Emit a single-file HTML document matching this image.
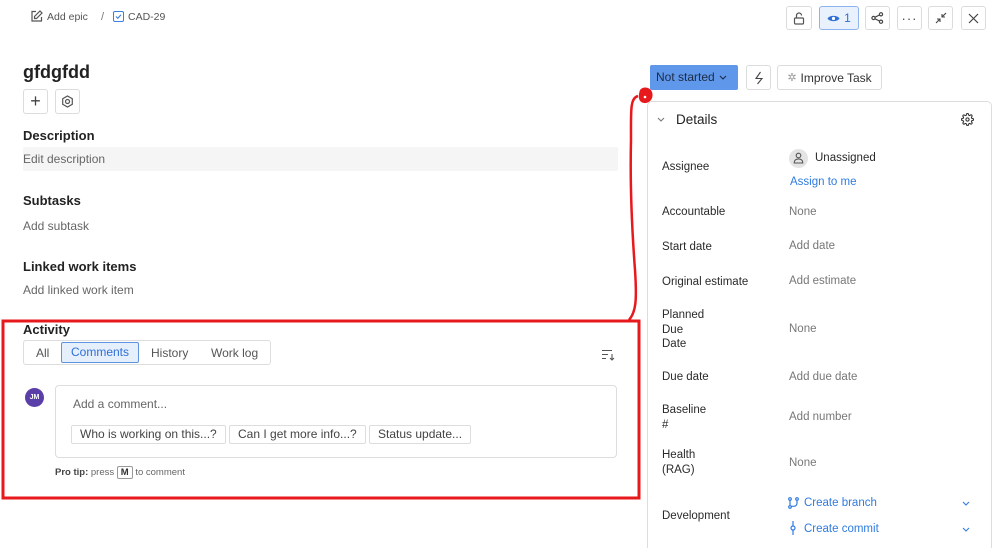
<!DOCTYPE html>
<html><head><meta charset="utf-8"><style>
*{box-sizing:border-box;margin:0;padding:0}
html,body{width:999px;height:548px;overflow:hidden}
body{background:#fff;font-family:"Liberation Sans",sans-serif;color:#222;position:relative}
.a{position:absolute;white-space:nowrap}
.btn{position:absolute;border:1px solid #dcdcdc;border-radius:3px;background:#fff;display:flex;align-items:center;justify-content:center}
.h{font-size:13px;font-weight:bold;color:#222}
.g{font-size:12px;color:#666}
.lb{font-size:11.5px;color:#2a2a2a;line-height:14.5px}
.v{font-size:11.5px;color:#777}
.bl{color:#2f7be0}
.chip{position:absolute;top:425px;height:19px;border:1px solid #ddd;border-radius:2px;font-size:12px;color:#444;padding:0 8px;line-height:17px}
</style></head><body>
<svg class="a" style="left:30px;top:10px" width="13" height="13" viewBox="0 0 13 13" fill="none" stroke="#555" stroke-width="1.2"><path d="M6 1.5H2v9.5h9.5V7"/><path d="M10 1l2 2-5.5 5.5H4.5V6.5z"/></svg>
<div class="a" style="left:47px;top:11px;font-size:10.5px;color:#555">Add epic</div>
<div class="a" style="left:101px;top:11px;font-size:11px;color:#777">/</div>
<svg class="a" style="left:113px;top:11px" width="11" height="11" viewBox="0 0 11 11"><rect x=".5" y=".5" width="10" height="10" rx="1.5" fill="none" stroke="#3d7fe0"/><path d="M3 5.5l1.8 1.8L8 3.8" fill="none" stroke="#3d7fe0" stroke-width="1.1"/></svg>
<div class="a" style="left:128px;top:11px;font-size:10.5px;color:#555">CAD-29</div>

<div class="btn" style="left:786px;top:6px;width:26px;height:24px"><svg width="12" height="13" viewBox="0 0 12 13" fill="none" stroke="#555" stroke-width="1.2"><rect x="1.5" y="6" width="9" height="6" rx="1"/><path d="M3.5 6V3.5a2.5 2.5 0 0 1 5 0"/></svg></div>
<div class="btn" style="left:819px;top:6px;width:40px;height:24px;background:#e9f1fd;border-color:#8db4ee;color:#2f6fd6;font-size:12px;gap:4px"><svg width="13" height="9" viewBox="0 0 13 9"><path d="M.5 4.5C2.5 1 10.5 1 12.5 4.5 10.5 8 2.5 8 .5 4.5z" fill="#2f6fd6"/><circle cx="6.5" cy="4.5" r="1.6" fill="#fff"/></svg>1</div>
<div class="btn" style="left:865px;top:6px;width:25px;height:24px"><svg width="13" height="12" viewBox="0 0 13 12" fill="none" stroke="#444" stroke-width="1.2"><circle cx="2.5" cy="6" r="1.6"/><circle cx="10" cy="2.3" r="1.6"/><circle cx="10" cy="9.7" r="1.6"/><path d="M4 5.2l4.5-2.2M4 6.8l4.5 2.2"/></svg></div>
<div class="btn" style="left:897px;top:6px;width:25px;height:24px;font-size:13px;color:#444;letter-spacing:1px">···</div>
<div class="btn" style="left:928px;top:6px;width:25px;height:24px"><svg width="12" height="12" viewBox="0 0 12 12" fill="none" stroke="#444" stroke-width="1.1"><path d="M11 1L7 5M7 2v3h3M1 11l4-4M2 7h3v3"/></svg></div>
<div class="btn" style="left:961px;top:6px;width:25px;height:24px"><svg width="11" height="11" viewBox="0 0 11 11" stroke="#444" stroke-width="1.2"><path d="M1 1l9 9M10 1l-9 9"/></svg></div>

<div class="a" style="left:23px;top:62px;font-size:18px;font-weight:bold;color:#222">gfdgfdd</div>
<div class="btn" style="left:23px;top:89px;width:25px;height:25px;font-size:18px;color:#444;font-weight:300">+</div>
<div class="btn" style="left:55px;top:89px;width:25px;height:25px"><svg width="13" height="13" viewBox="0 0 13 13" fill="none" stroke="#555" stroke-width="1.2"><path d="M6.5 1l4.8 2.75v5.5L6.5 12 1.7 9.25v-5.5z"/><circle cx="6.5" cy="6.5" r="2"/></svg></div>

<div class="a h" style="left:23px;top:128px">Description</div>
<div class="a" style="left:23px;top:147px;width:595px;height:24px;background:#f4f5f4;border-radius:2px"></div>
<div class="a g" style="left:23px;top:152px">Edit description</div>
<div class="a h" style="left:23px;top:193px">Subtasks</div>
<div class="a g" style="left:23px;top:219px">Add subtask</div>
<div class="a h" style="left:23px;top:259px">Linked work items</div>
<div class="a g" style="left:23px;top:283px">Add linked work item</div>

<div class="a h" style="left:23px;top:322px">Activity</div>
<div class="a" style="left:23px;top:340px;width:248px;height:25px;border:1px solid #ddd;border-radius:3px"></div>
<div class="a" style="left:36px;top:346px;font-size:12px;color:#555">All</div>
<div class="a" style="left:61px;top:342px;width:78px;height:21px;border:1px solid #5e93e0;background:#e6effc;border-radius:2px;font-size:12px;color:#2f6fd6;text-align:center;line-height:19px">Comments</div>
<div class="a" style="left:151px;top:346px;font-size:12px;color:#555">History</div>
<div class="a" style="left:211px;top:346px;font-size:12px;color:#555">Work log</div>
<svg class="a" style="left:601px;top:349px" width="14" height="12" viewBox="0 0 14 12" fill="none" stroke="#555" stroke-width="1.1"><path d="M1 1.5h10M1 5.5h6M1 9.5h4M11 5v6M9 9l2 2 2-2"/></svg>

<div class="a" style="left:25px;top:388px;width:19px;height:19px;border-radius:50%;background:#5b3fa8;color:#fff;font-size:7px;font-weight:bold;text-align:center;line-height:19px">JM</div>
<div class="a" style="left:55px;top:385px;width:562px;height:73px;border:1px solid #ddd;border-radius:4px"></div>
<div class="a" style="left:73px;top:397px;font-size:12px;color:#666">Add a comment...</div>
<div class="chip" style="left:71px">Who is working on this...?</div>
<div class="chip" style="left:229px">Can I get more info...?</div>
<div class="chip" style="left:369px">Status update...</div>
<div class="a" style="left:55px;top:466px;font-size:9.5px;color:#666"><b style="color:#444">Pro tip:</b> press <span style="display:inline-block;border:1px solid #999;border-radius:2px;padding:0 3px;font-weight:bold;color:#333">M</span> to comment</div>

<div class="a" style="left:650px;top:65px;width:88px;height:25px;background:#5f97ea;border-radius:2px;font-size:12px;color:#1c2b45;line-height:25px;padding-left:6px">Not started</div>
<svg class="a" style="left:719px;top:75px" width="8" height="5" viewBox="0 0 8 5" fill="none" stroke="#1c2b45" stroke-width="1.1"><path d="M1 1l3 3 3-3"/></svg>
<div class="btn" style="left:746px;top:65px;width:25px;height:25px"><svg width="10" height="14" viewBox="0 0 10 14" fill="none" stroke="#444" stroke-width="1.1"><path d="M6.5 1L2 7.5h6L3.5 13"/></svg></div>
<div class="btn" style="left:777px;top:65px;width:105px;height:25px;font-size:12px;color:#333;gap:4px"><span style="color:#999;font-size:11px">✲</span>Improve Task</div>

<div class="a" style="left:647px;top:101px;width:345px;height:470px;border:1px solid #ddd;border-radius:5px"></div>
<svg class="a" style="left:657px;top:117px" width="8" height="5" viewBox="0 0 8 5" fill="none" stroke="#777" stroke-width="1.1"><path d="M1 1l3 3 3-3"/></svg>
<div class="a" style="left:676px;top:112px;font-size:13.5px;color:#222">Details</div>
<svg class="a" style="left:961px;top:113px" width="13" height="13" viewBox="0 0 24 24" fill="none" stroke="#333" stroke-width="2"><circle cx="12" cy="12" r="3"/><path d="M19.4 15a1.7 1.7 0 0 0 .3 1.8l.1.1a2 2 0 1 1-2.8 2.8l-.1-.1a1.7 1.7 0 0 0-1.8-.3 1.7 1.7 0 0 0-1 1.5V21a2 2 0 1 1-4 0v-.1A1.7 1.7 0 0 0 9 19.4a1.7 1.7 0 0 0-1.8.3l-.1.1a2 2 0 1 1-2.8-2.8l.1-.1a1.7 1.7 0 0 0 .3-1.8 1.7 1.7 0 0 0-1.5-1H3a2 2 0 1 1 0-4h.1A1.7 1.7 0 0 0 4.6 9a1.7 1.7 0 0 0-.3-1.8l-.1-.1a2 2 0 1 1 2.8-2.8l.1.1a1.7 1.7 0 0 0 1.8.3H9a1.7 1.7 0 0 0 1-1.5V3a2 2 0 1 1 4 0v.1a1.7 1.7 0 0 0 1 1.5 1.7 1.7 0 0 0 1.8-.3l.1-.1a2 2 0 1 1 2.8 2.8l-.1.1a1.7 1.7 0 0 0-.3 1.8V9a1.7 1.7 0 0 0 1.5 1H21a2 2 0 1 1 0 4h-.1a1.7 1.7 0 0 0-1.5 1z"/></svg>

<div class="a lb" style="left:662px;top:160px">Assignee</div>
<div class="a" style="left:789px;top:149px;width:19px;height:19px;border-radius:50%;background:#e4e4e4"></div>
<svg class="a" style="left:793px;top:152px" width="11" height="12" viewBox="0 0 11 12" fill="none" stroke="#555" stroke-width="1.1"><circle cx="5.5" cy="3.5" r="2.3"/><path d="M1.2 11c0-3 2-4 4.3-4s4.3 1 4.3 4z"/></svg>
<div class="a lb" style="left:815px;top:151px">Unassigned</div>
<div class="a lb bl" style="left:790px;top:175px">Assign to me</div>
<div class="a lb" style="left:662px;top:205px">Accountable</div><div class="a v" style="left:789px;top:206px">None</div>
<div class="a lb" style="left:662px;top:240px">Start date</div><div class="a v" style="left:789px;top:240px">Add date</div>
<div class="a lb" style="left:662px;top:275px">Original estimate</div><div class="a v" style="left:789px;top:275px">Add estimate</div>
<div class="a lb" style="left:662px;top:308px">Planned<br>Due<br>Date</div><div class="a v" style="left:789px;top:323px">None</div>
<div class="a lb" style="left:662px;top:370px">Due date</div><div class="a v" style="left:789px;top:371px">Add due date</div>
<div class="a lb" style="left:662px;top:403px">Baseline<br>#</div><div class="a v" style="left:789px;top:411px">Add number</div>
<div class="a lb" style="left:662px;top:448px">Health<br>(RAG)</div><div class="a v" style="left:789px;top:457px">None</div>
<div class="a lb" style="left:662px;top:509px">Development</div>
<svg class="a" style="left:788px;top:497px" width="11" height="12" viewBox="0 0 11 12" fill="none" stroke="#2f7be0" stroke-width="1.2"><circle cx="2" cy="2" r="1.3"/><circle cx="2" cy="10" r="1.3"/><circle cx="9" cy="2" r="1.3"/><path d="M2 3.3v5.4M9 3.3v3a3 3 0 0 1-3 3H3.3"/></svg>
<div class="a lb bl" style="left:804px;top:496px">Create branch</div>
<svg class="a" style="left:962px;top:501px" width="8" height="5" viewBox="0 0 8 5" fill="none" stroke="#2f7be0" stroke-width="1.1"><path d="M1 1l3 3 3-3"/></svg>
<svg class="a" style="left:790px;top:521px" width="6" height="14" viewBox="0 0 6 14" fill="none" stroke="#2f7be0" stroke-width="1.2"><circle cx="3" cy="7" r="2"/><path d="M3 0v5M3 9v5"/></svg>
<div class="a lb bl" style="left:804px;top:522px">Create commit</div>
<svg class="a" style="left:962px;top:527px" width="8" height="5" viewBox="0 0 8 5" fill="none" stroke="#2f7be0" stroke-width="1.1"><path d="M1 1l3 3 3-3"/></svg>

<svg class="a" style="left:0;top:0" width="999" height="548" fill="none">
<rect x="3" y="321" width="636" height="177" stroke="#e8191c" stroke-width="3"/>
<path d="M629 320 C636 312 637 300 635 270 C632 230 630 180 631 140 C631 110 630 98 638 96" stroke="#e8191c" stroke-width="2.5"/>
<path d="M640 90 C643 86 650 87 652 92 C654 98 650 103 645 103 C640 103 637 99 640 90z" fill="#e8191c"/>
<circle cx="645" cy="97" r="1.3" fill="#fff"/>
</svg>
</body></html>
